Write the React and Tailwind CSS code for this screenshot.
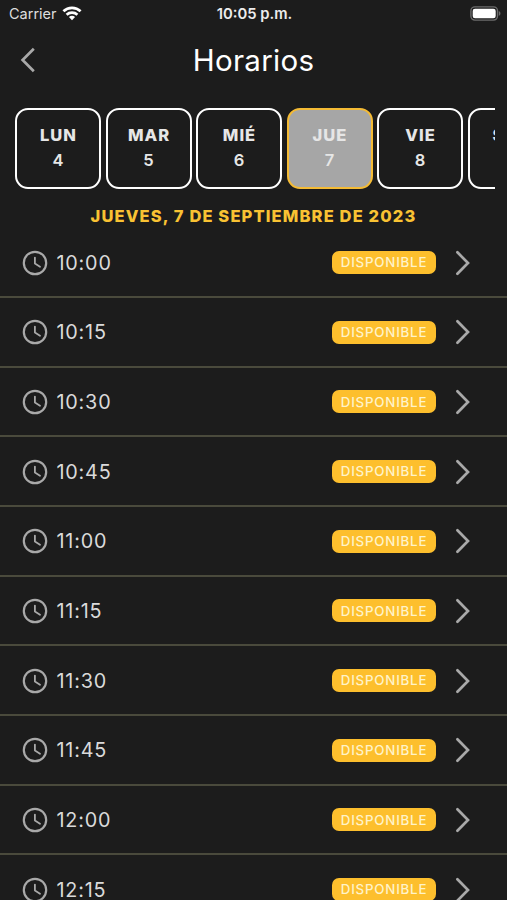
const days = [
    { name: 'LUN', number: 4 },
    { name: 'MAR', number: 5 },
    { name: 'MIÉ', number: 6 },
    { name: 'JUE', number: 7 },
    { name: 'VIE', number: 8 },
    { name: 'SÁB', number: 9 },
];

const slots = ['10:00', '10:15', '10:30', '10:45', '11:00', '11:15', '11:30', '11:45', '12:00', '12:15'];

const WifiIcon = () => (
    <svg width="20" height="15" viewBox="0 0 20 15" fill="none" stroke="#ffffff" strokeWidth="2.7">
        <path d="M1.4 5.3 C6.2 0.7 13.8 0.7 18.6 5.3" />
        <path d="M4.6 8.7 C7.6 5.9 12.4 5.9 15.4 8.7" />
        <path d="M10 14.2 L6.9 11 C8.6 9.4 11.4 9.4 13.1 11 Z" fill="#ffffff" stroke="none" />
    </svg>
);

const BatteryIcon = () => (
    <svg width="31" height="15" viewBox="0 0 31 15">
        <rect x="0.9" y="0.9" width="26.6" height="13.2" rx="4" fill="none" stroke="#6b6b6b" strokeWidth="1.4" />
        <rect x="2.7" y="2.7" width="23" height="9.6" rx="2.3" fill="#ffffff" />
        <path d="M28.8 5 C31 5.8 31 9 28.8 9.8 Z" fill="#6b6b6b" />
    </svg>
);

const ClockIcon = () => (
    <svg width="26" height="26" viewBox="0 0 26 26" fill="none" stroke="#a9a9a9" strokeLinecap="round" strokeLinejoin="round">
        <circle cx="13" cy="13" r="11.2" strokeWidth="2.2" />
        <path d="M12.9 7.6 V13.6 L18 16.7" strokeWidth="1.8" />
    </svg>
);

const ChevronRight = () => (
    <svg width="16" height="26" viewBox="0 0 16 26" fill="none" stroke="#a9a9a9" strokeWidth="2.7" strokeLinecap="round">
        <path d="M2.4 2.3 L13 13 L2.4 23.7" />
    </svg>
);

const App = () => {
    const selected = 7;

    return (
        <div className="h-[900px] w-[507px] overflow-hidden bg-[#1c1c1c] font-['Inter',sans-serif] text-white">
            <div className="grid h-[27px] grid-cols-3 items-center pl-[9px] pr-[6px]">
                <div className="flex items-center gap-[5px] text-[14.5px] leading-none text-[#dedede]">
                    <span className="pt-[2px]">Carrier</span>
                    <WifiIcon />
                </div>
                <div className="pr-px pt-[2px] text-center text-[14.8px] font-semibold leading-none text-[#ececec]">10:05 p.m.</div>
                <div className="flex justify-end">
                    <BatteryIcon />
                </div>
            </div>

            <div className="grid h-[81px] grid-cols-[60px_1fr_60px] items-center pb-[16px]">
                <button className="pl-[20px]">
                    <svg width="16" height="26" viewBox="0 0 16 26" fill="none" stroke="#a9a9a9" strokeWidth="2.7">
                        <path d="M13.8 1.8 L2.6 13 L13.8 24.2" />
                    </svg>
                </button>
                <h1 className="pt-[2px] text-center text-[29.5px] leading-none tracking-[0.3px]">Horarios</h1>
            </div>

            <div className="ml-[15px] mr-[12px] flex gap-[4.5px] overflow-hidden">
                {days.map(day => (
                    <div
                        key={day.number}
                        className={`flex h-[81px] w-[86px] shrink-0 flex-col items-center justify-center rounded-[13px] border-[2.5px] pb-px text-[16.5px] font-bold leading-[25px] text-[#e6e6e6] ${day.number === selected ? 'border-[#f4bb35] bg-[#a6a6a6]' : 'border-white'}`}
                    >
                        <span className="pl-px font-extrabold tracking-[1px]">{day.name}</span>
                        <span className="font-semibold">{day.number}</span>
                    </div>
                ))}
            </div>

            <h2 className="h-[39.3px] pt-[17px] text-center text-[16.5px] font-extrabold leading-[20px] tracking-[1.13px] text-[#f9c233]">
                JUEVES, 7 DE SEPTIEMBRE DE 2023
            </h2>

            <div>
                {slots.map(slot => (
                    <div key={slot} className="flex h-[69.66px] items-center border-b-2 border-[#4a4a3c] pl-[22px] pr-[36px] pt-px">
                        <ClockIcon />
                        <span className="ml-[8.5px] pt-[2px] text-[19.8px] leading-none tracking-[0.8px] text-[#dadada]">{slot}</span>
                        <span className="ml-auto mr-[19px] flex h-[23px] w-[104px] items-center justify-center rounded-[7px] bg-[#fdbf2d] pt-px text-[13.3px] font-medium leading-none tracking-[0.8px] text-[#fff3c9]">
                            DISPONIBLE
                        </span>
                        <ChevronRight />
                    </div>
                ))}
            </div>
        </div>
    );
};

export default App;
